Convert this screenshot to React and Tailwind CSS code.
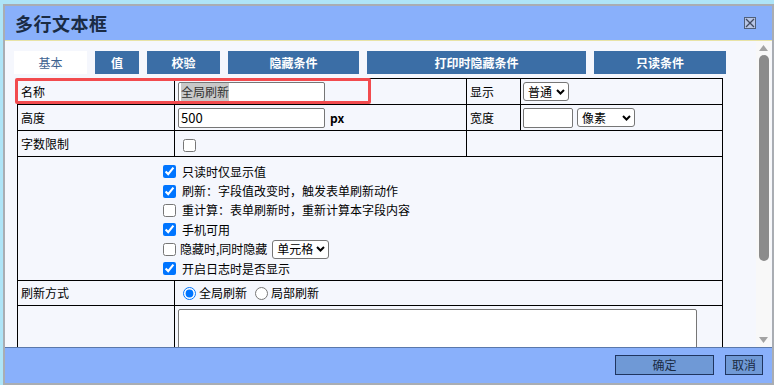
import React from "react";

const font = { fontFamily: '"Noto Sans CJK SC", "Noto Sans", sans-serif' };

const tabs = [
  { name: "基本", w: "w-[73px]", active: true },
  { name: "值", w: "w-[44px]" },
  { name: "校验", w: "w-[73px]" },
  { name: "隐藏条件", w: "w-[131px]" },
  { name: "打印时隐藏条件", w: "w-[219px]" },
  { name: "只读条件", w: "w-[132px]" },
];

function Check({ checked, children }) {
  return (
    <label className="flex items-center h-[19.4px] gap-[6px]">
      <input type="checkbox" defaultChecked={checked} className="w-[13px] h-[13px] m-0" />
      {children}
    </label>
  );
}

// drawn as a box so the text is not clipped by the native control
function Select({ value, w }) {
  return (
    <div className={`${w} h-[19px] flex items-center justify-between bg-white border border-[#767676] rounded-[3px] pl-[4px] pr-[3px] text-[12px]`}>
      <span>{value}</span>
      <svg width="9" height="6" viewBox="0 0 9 6">
        <path d="M1 1L4.5 4.5L8 1" fill="none" stroke="#000" strokeWidth="2" />
      </svg>
    </div>
  );
}

export default function App() {
  return (
    <div className="w-[774px] h-[385px] bg-[#aee4f7] pt-[4px] pl-[3px] overflow-hidden text-[12px] text-black" style={font}>
      <div className="relative h-[381px] flex flex-col border-2 border-[#a9adb3] bg-[#f5f7fd]">
        {/* title bar */}
        <div className="h-[35px] flex items-center justify-between bg-[#89b0fb] border-b border-[#e8e3a6] pl-[10px] pr-[16px]">
          <span className="text-[18px] font-bold text-[#1a2b44] tracking-[0.5px]">多行文本框</span>
          <div className="w-[12px] h-[12px] border border-[#50607a] bg-[#b8c6e6] flex items-center justify-center">
            <svg width="10" height="10" viewBox="0 0 10 10">
              <path d="M1 1L9 9M9 1L1 9" stroke="#404a60" strokeWidth="1.3" />
            </svg>
          </div>
        </div>

        {/* body */}
        <div className="flex flex-1 min-h-0">
          <div className="flex-1 min-w-0 overflow-hidden pl-[9px] pt-[10px]">
            <div className="flex gap-[8px]">
              {tabs.map((t) => (
                <div
                  key={t.name}
                  className={`${t.w} h-[23px] flex items-center justify-center text-[12px] ${
                    t.active ? "bg-white text-[#3d6290]" : "bg-[#3b6ea6] text-white font-bold"
                  }`}
                >
                  {t.name}
                </div>
              ))}
            </div>

            <div className="relative mt-[4px] ml-[3px]">
              <table className="w-[705px] table-fixed border border-black">
                <colgroup>
                  <col className="w-[157px]" />
                  <col className="w-[292px]" />
                  <col className="w-[54px]" />
                  <col className="w-[202px]" />
                </colgroup>
                <tbody>
                  <tr className="h-[26px]">
                    <td className="border border-black px-[3px]">名称</td>
                    <td className="border border-black px-[3px]">
                      <div className="w-[147px] h-[20px] bg-white border border-[#767676] rounded-[2px] flex items-center px-[2px]">
                        <span className="bg-[#c8c8c8] text-[#333]">全局刷新</span>
                      </div>
                    </td>
                    <td className="border border-black px-[3px]">显示</td>
                    <td className="border border-black px-[2px]">
                      <Select value="普通" w="w-[46px]" />
                    </td>
                  </tr>
                  <tr className="h-[26px]">
                    <td className="border border-black px-[3px]">高度</td>
                    <td className="border border-black px-[3px]">
                      <div className="flex items-center gap-[5px]">
                        <div className="w-[147px] h-[20px] bg-white border border-[#767676] rounded-[2px] flex items-center px-[2px] text-[13px]">500</div>
                        <span className="font-bold">px</span>
                      </div>
                    </td>
                    <td className="border border-black px-[3px]">宽度</td>
                    <td className="border border-black px-[2px]">
                      <div className="flex items-center gap-[4px]">
                        <div className="w-[50px] h-[20px] bg-white border border-[#767676] rounded-[2px]" />
                        <Select value="像素" w="w-[58px]" />
                      </div>
                    </td>
                  </tr>
                  <tr className="h-[26px]">
                    <td className="border border-black px-[3px]">字数限制</td>
                    <td className="border border-black px-[8px]">
                      <input type="checkbox" className="w-[13px] h-[13px] m-0 align-middle" />
                    </td>
                    <td colSpan={2} className="border border-black" />
                  </tr>
                  <tr className="h-[124px]">
                    <td colSpan={4} className="border border-black align-top pt-[5px] pl-[145px]">
                      <Check checked>只读时仅显示值</Check>
                      <Check checked>刷新：字段值改变时，触发表单刷新动作</Check>
                      <Check>重计算：表单刷新时，重新计算本字段内容</Check>
                      <Check checked>手机可用</Check>
                      <label className="flex items-center h-[19.4px]">
                        <input type="checkbox" className="w-[13px] h-[13px] m-0" />
                        <span className="ml-[4px]">隐藏时,同时隐藏</span>
                        <Select value="单元格" w="w-[57px] ml-[5px]" />
                      </label>
                      <Check checked>开启日志时是否显示</Check>
                    </td>
                  </tr>
                  <tr className="h-[25px]">
                    <td className="border border-black px-[3px]">刷新方式</td>
                    <td colSpan={3} className="border border-black px-[8px]">
                      <div className="flex items-center">
                        <input type="radio" name="r" defaultChecked className="w-[13px] h-[13px] m-0" />
                        <span className="ml-[3px]">全局刷新</span>
                        <input type="radio" name="r" className="w-[13px] h-[13px] m-0 ml-[8px]" />
                        <span className="ml-[3px]">局部刷新</span>
                      </div>
                    </td>
                  </tr>
                  <tr className="h-[80px]">
                    <td className="border border-black" />
                    <td colSpan={3} className="border border-black align-top pt-[3px] px-[3px]">
                      <div className="w-[519px] h-[70px] bg-white border border-[#767676] rounded-[2px]" />
                    </td>
                  </tr>
                </tbody>
              </table>
              {/* highlight annotation */}
              <div className="absolute left-[-2px] top-0 w-[356px] h-[26px] border-[3px] border-[#f24b4e] rounded-[2px]" />
            </div>
          </div>

          {/* scrollbar */}
          <div className="w-[15px] mr-[1px] bg-[#f8f8f8] flex flex-col items-center justify-between py-[4px]">
            <div className="flex flex-col items-center gap-[4px] w-full">
              <svg width="9" height="6" viewBox="0 0 9 6"><path d="M4.5 0L9 6H0z" fill="#a3a3a3" /></svg>
              <div className="w-[10px] h-[206px] bg-[#8b8b8b] rounded-[5px]" />
            </div>
            <svg width="9" height="6" viewBox="0 0 9 6"><path d="M0 0H9L4.5 6z" fill="#a3a3a3" /></svg>
          </div>
        </div>

        {/* footer */}
        <div className="h-[36px] shrink-0 bg-[#89b0fb] border-t border-[#5a78ab] flex items-start justify-end gap-[11px] pt-[7px] pr-[9px]">
          <button className="w-[99px] h-[20px] bg-[#6f99d6] border border-[#1f3560] text-[12px] text-[#1a2b44]">确定</button>
          <button className="w-[38px] h-[20px] bg-[#6f99d6] border border-[#1f3560] text-[12px] text-[#1a2b44]">取消</button>
        </div>
      </div>
    </div>
  );
}
